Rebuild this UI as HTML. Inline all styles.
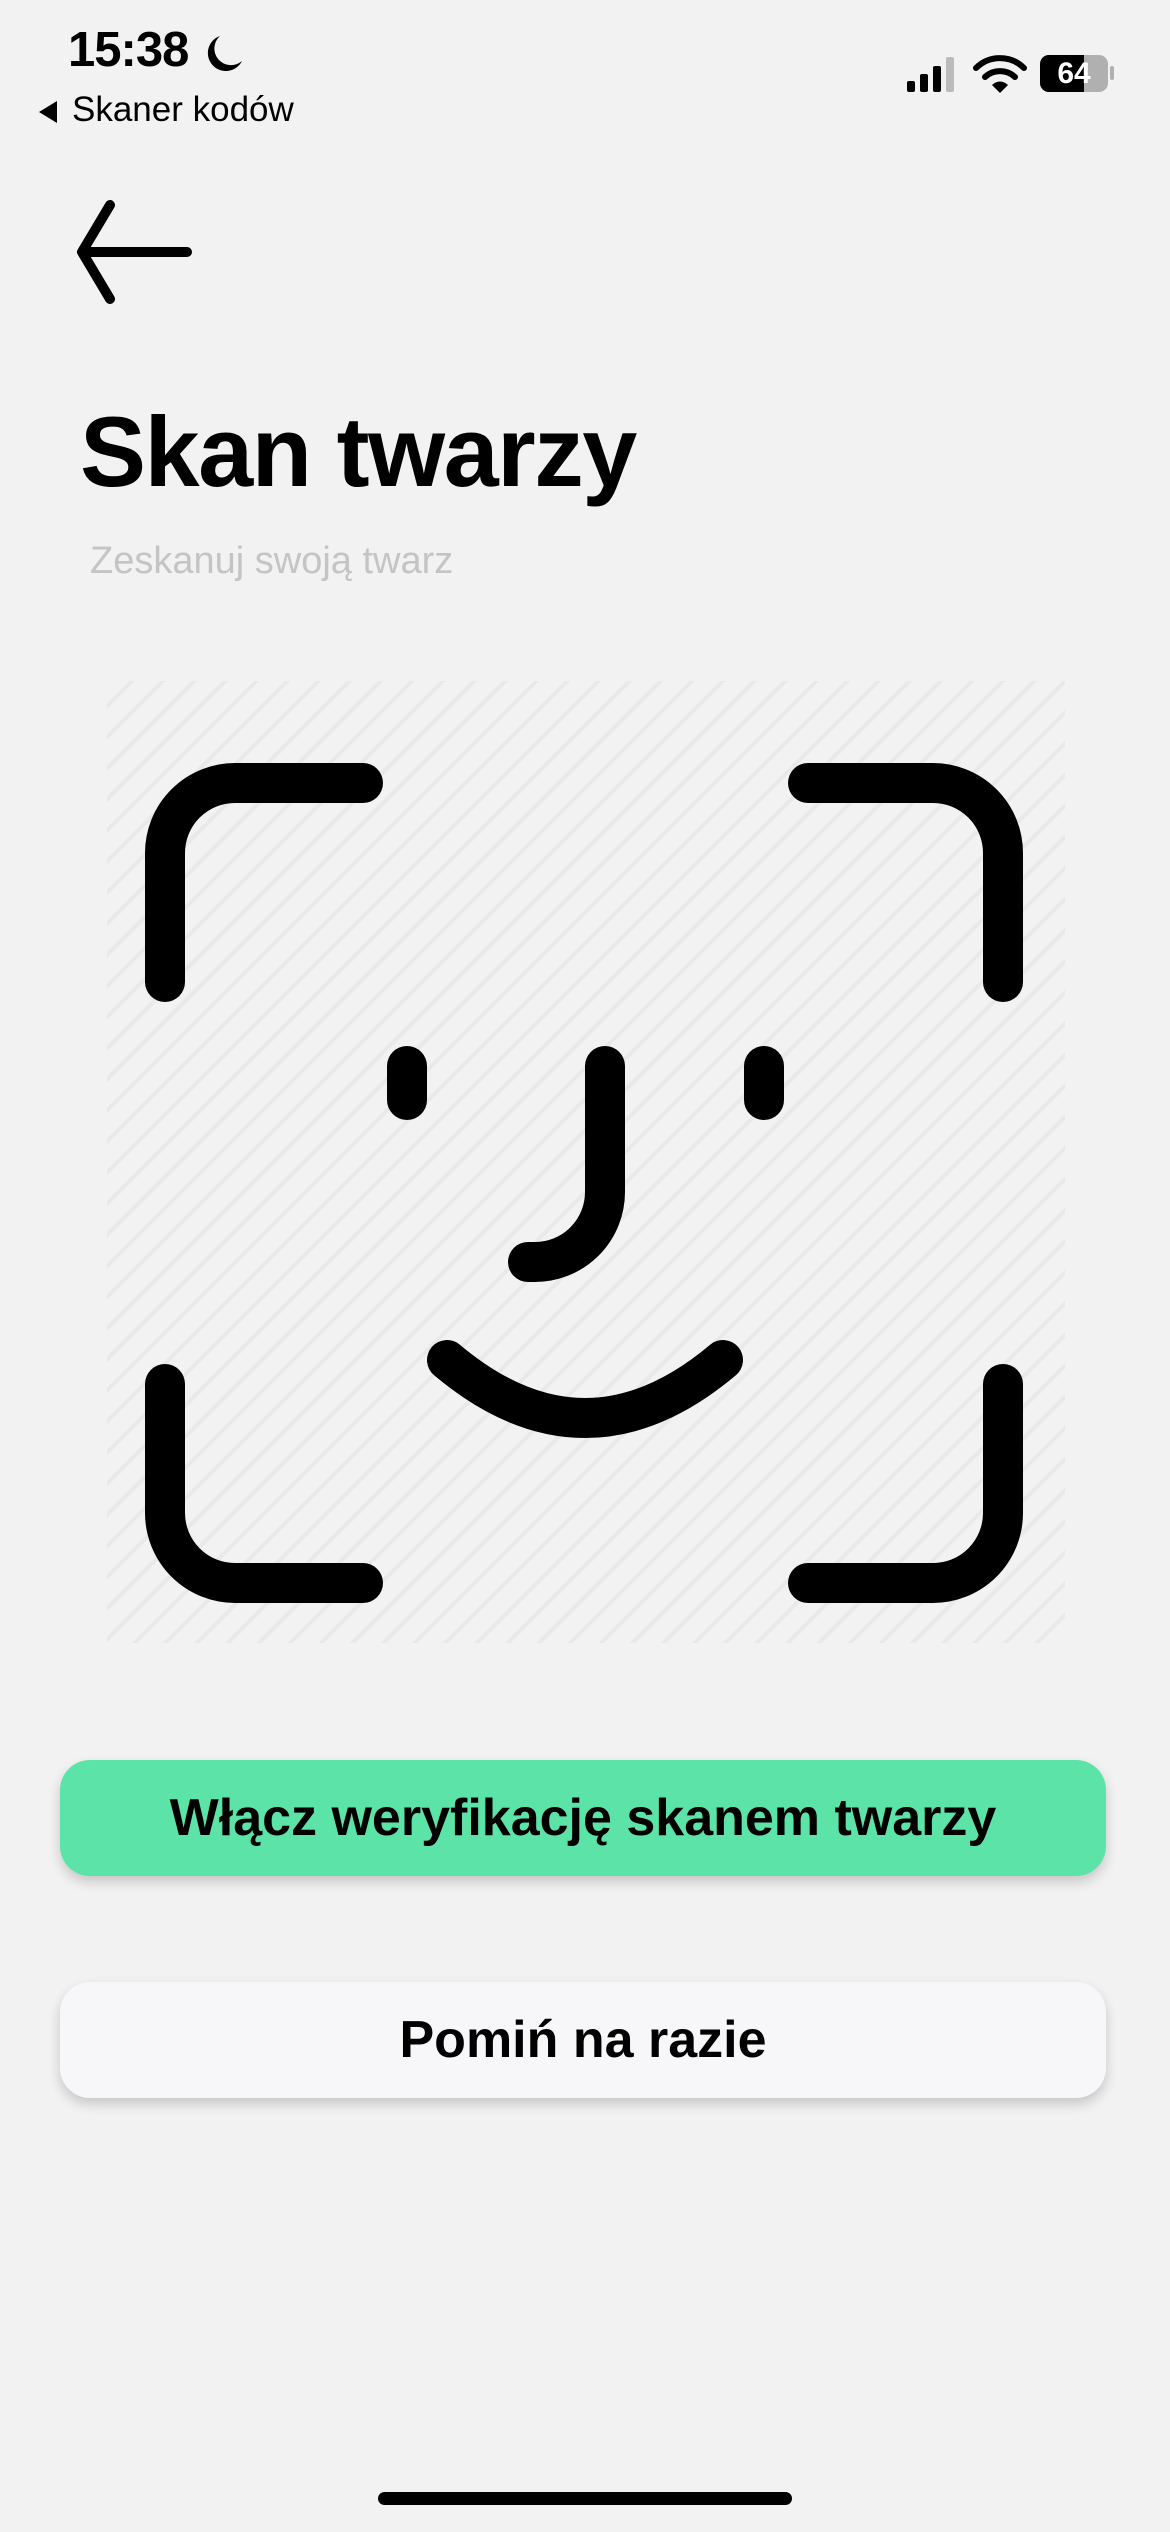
<!DOCTYPE html>
<html><head><meta charset="utf-8">
<style>
html,body{margin:0;padding:0;}
body{width:1170px;height:2532px;background:#f2f2f2;position:relative;overflow:hidden;font-family:"Liberation Sans",sans-serif;color:#000;}
.abs{position:absolute;}
.btn{position:absolute;left:60px;width:1046px;height:116px;border-radius:30px;box-shadow:0 6px 12px rgba(0,0,0,0.18);display:flex;align-items:center;justify-content:center;font-weight:bold;font-size:52px;}
</style></head><body>
<div class="abs" style="left:68px;top:22px;font-size:49px;font-weight:bold;letter-spacing:-1px;">15:38</div>
<svg class="abs" style="left:203px;top:33px" width="42" height="42" viewBox="0 0 42 42"><path d="M17 3 A18 18 0 1 0 39 28 A15 15 0 0 1 17 3Z" fill="#000"/></svg>
<svg class="abs" style="left:37px;top:100px" width="22" height="24"><path d="M20 1 L2 12 L20 23Z" fill="#000"/></svg>
<div class="abs" style="left:72px;top:90px;font-size:35px;">Skaner kodów</div>
<svg class="abs" style="left:905px;top:55px" width="56" height="38"><rect x="2" y="26" width="8" height="11" rx="2"/><rect x="15" y="19" width="8" height="18" rx="2"/><rect x="28" y="11" width="8" height="26" rx="2"/><rect x="41" y="2" width="8" height="35" rx="2" fill="#bbb"/></svg>
<svg class="abs" style="left:972px;top:54px" width="56" height="40" viewBox="0 0 56 40"><path d="M4 14 A34 34 0 0 1 52 14" stroke="#000" stroke-width="6" fill="none" stroke-linecap="round"/><path d="M13 23 A22 22 0 0 1 43 23" stroke="#000" stroke-width="6" fill="none" stroke-linecap="round"/><path d="M20 31 L28 39 L36 31 A11 11 0 0 0 20 31Z" fill="#000"/></svg>
<div class="abs" style="left:1040px;top:55px;width:68px;height:37px;border-radius:9px;background:#b0b0b0;overflow:hidden;"><div style="width:44px;height:37px;background:#000;"></div><div style="position:absolute;left:0;top:0;width:68px;text-align:center;line-height:37px;color:#fff;font-weight:bold;font-size:30px;">64</div></div>
<div class="abs" style="left:1110px;top:66px;width:4px;height:14px;border-radius:2px;background:#b0b0b0;"></div>
<svg class="abs" style="left:70px;top:195px" width="130" height="115"><path d="M117 57 L14 57 M40 10 L12 57 L40 104" stroke="#000" stroke-width="10" fill="none" stroke-linecap="round" stroke-linejoin="round"/></svg>
<div class="abs" style="left:80px;top:395px;font-size:99px;font-weight:bold;letter-spacing:-1.5px;">Skan twarzy</div>
<div class="abs" style="left:90px;top:540px;font-size:38px;color:#c4c4c4;">Zeskanuj swoją twarz</div>
<div class="abs" style="left:107px;top:681px;width:958px;height:962px;background:repeating-linear-gradient(-45deg,#f2f2f2 0 18px,#e9e9e9 18px 22px);"></div>
<svg class="abs" style="left:0;top:0" width="1170" height="1700" fill="none" stroke="#000" stroke-width="40" stroke-linecap="round">
<path d="M165 982 L165 853 A70 70 0 0 1 235 783 L363 783"/>
<path d="M808 783 L933 783 A70 70 0 0 1 1003 853 L1003 982"/>
<path d="M165 1384 L165 1513 A70 70 0 0 0 235 1583 L363 1583"/>
<path d="M808 1583 L933 1583 A70 70 0 0 0 1003 1513 L1003 1384"/>
<path d="M407 1066 L407 1100"/>
<path d="M764 1066 L764 1100"/>
<path d="M605 1066 L605 1192 A70 70 0 0 1 535 1262 L528 1262"/>
<path d="M447 1360 Q585 1476 723 1360"/>
</svg>
<div class="btn" style="top:1760px;background:#5ce4a8;">Włącz weryfikację skanem twarzy</div>
<div class="btn" style="top:1982px;background:#f7f7f9;">Pomiń na razie</div>
<div class="abs" style="left:378px;top:2492px;width:414px;height:13px;border-radius:7px;background:#000;"></div>
</body></html>
